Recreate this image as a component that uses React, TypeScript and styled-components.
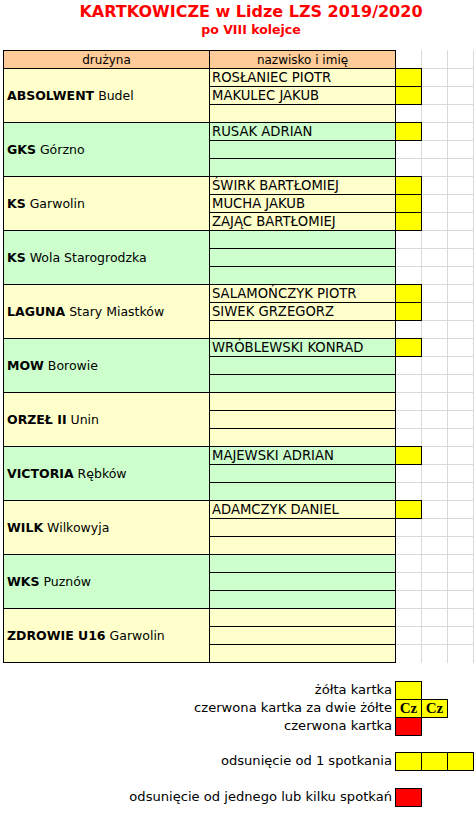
import React from 'react';
import styled, { createGlobalStyle } from 'styled-components';

const Global = createGlobalStyle`
  html, body { margin: 0; padding: 0; background: #fff; }
  body { font-family: "DejaVu Sans", Verdana, sans-serif; color: #000; }
  *, *::before, *::after { box-sizing: border-box; }
`;

const Page = styled.div`
  width: 476px;
  height: 813px;
  overflow: hidden;
`;

const Heading = styled.header`
  height: 50px;
  padding: 3px 0 0 26px;
  display: flex;
  flex-direction: column;
  align-items: center;
  color: #ff0000;
`;

const Title = styled.h1`
  margin: 0;
  font-size: 16px;
  line-height: 18px;
  font-weight: bold;
  white-space: nowrap;
`;

const Subtitle = styled.h2`
  margin: 1px 0 0;
  font-size: 12.5px;
  line-height: 15px;
  font-weight: bold;
  white-space: nowrap;
`;

const Sheet = styled.div`
  display: grid;
  margin-left: 3px;
  grid-template-columns: 207px 186px 26px 26px 26px;
  grid-template-rows: 19px;
  grid-auto-rows: 18px;
`;

const HeadCell = styled.div<{ $first?: boolean }>`
  background: #ffcc99;
  border-top: 1px solid #000;
  border-right: 1px solid #000;
  border-bottom: 1px solid #000;
  border-left: ${(p) => (p.$first ? '1px solid #000' : 'none')};
  display: flex;
  align-items: center;
  justify-content: center;
  font-size: 12px;
  white-space: nowrap;
`;

const EmptyCell = styled.div<{ $last?: boolean }>`
  border-right: 1px solid #d9d9d9;
  border-bottom: ${(p) => (p.$last ? 'none' : '1px solid #d9d9d9')};
`;

const TeamCell = styled.div<{ $bg: string }>`
  grid-row: span 3;
  background: ${(p) => p.$bg};
  border-left: 1px solid #000;
  border-right: 1px solid #000;
  border-bottom: 1px solid #000;
  display: flex;
  align-items: center;
  padding-left: 3px;
  font-size: 12.5px;
  white-space: nowrap;
  b { font-weight: bold; }
`;

const PlayerCell = styled.div<{ $bg: string }>`
  background: ${(p) => p.$bg};
  border-right: 1px solid #000;
  border-bottom: 1px solid #000;
  display: flex;
  align-items: center;
  padding-left: 2px;
  font-size: 13.2px;
  white-space: nowrap;
`;

const CardCell = styled.div`
  background: #ffff00;
  border: 1px solid #000;
  margin: -1px 0 0 -1px;
  position: relative;
  z-index: 1;
`;

const Legend = styled.div`
  display: grid;
  margin: 19px 0 0 3px;
  grid-template-columns: 393px 26px 26px 26px;
  grid-template-rows: 18px 18px 18px 17px 18px 18px 18px;
`;

const LegendLabel = styled.div<{ $row: number }>`
  grid-column: 1;
  grid-row: ${(p) => p.$row};
  text-align: right;
  padding-right: 4px;
  font-size: 13.1px;
  line-height: 16px;
  white-space: nowrap;
`;

const LegendBox = styled.div<{ $row: number; $col: number; $color: string }>`
  grid-column: ${(p) => p.$col};
  grid-row: ${(p) => p.$row};
  background: ${(p) => p.$color};
  border: 1px solid #000;
  margin: -1px 0 0 -1px;
  display: flex;
  align-items: center;
  justify-content: center;
  font-family: "Liberation Serif", "Times New Roman", serif;
  font-weight: bold;
  font-size: 15px;
`;

const YELLOW_BG = '#ffffcc';
const GREEN_BG = '#ccffcc';
const CARD_YELLOW = '#ffff00';
const CARD_RED = '#ff0000';

type Team = { bold: string; rest: string; players: string[] };

const teams: Team[] = [
  { bold: 'ABSOLWENT', rest: 'Budel', players: ['ROSŁANIEC PIOTR', 'MAKULEC JAKUB'] },
  { bold: 'GKS', rest: 'Górzno', players: ['RUSAK ADRIAN'] },
  { bold: 'KS', rest: 'Garwolin', players: ['ŚWIRK BARTŁOMIEJ', 'MUCHA JAKUB', 'ZAJĄC BARTŁOMIEJ'] },
  { bold: 'KS', rest: 'Wola Starogrodzka', players: [] },
  { bold: 'LAGUNA', rest: 'Stary Miastków', players: ['SALAMOŃCZYK PIOTR', 'SIWEK GRZEGORZ'] },
  { bold: 'MOW', rest: 'Borowie', players: ['WRÓBLEWSKI KONRAD'] },
  { bold: 'ORZEŁ II', rest: 'Unin', players: [] },
  { bold: 'VICTORIA', rest: 'Rębków', players: ['MAJEWSKI ADRIAN'] },
  { bold: 'WILK', rest: 'Wilkowyja', players: ['ADAMCZYK DANIEL'] },
  { bold: 'WKS', rest: 'Puznów', players: [] },
  { bold: 'ZDROWIE U16', rest: 'Garwolin', players: [] },
];

export default function App() {
  return (
    <Page>
      <Global />
      <Heading>
        <Title>KARTKOWICZE w Lidze LZS 2019/2020</Title>
        <Subtitle>po VIII kolejce</Subtitle>
      </Heading>
      <Sheet>
        <HeadCell $first>drużyna</HeadCell>
        <HeadCell>nazwisko i imię</HeadCell>
        <EmptyCell />
        <EmptyCell />
        <EmptyCell />
        {teams.map((t, ti) => {
          const bg = ti % 2 === 0 ? YELLOW_BG : GREEN_BG;
          const isLastTeam = ti === teams.length - 1;
          return (
            <React.Fragment key={ti}>
              <TeamCell $bg={bg}>
                <span>
                  <b>{t.bold}</b> {t.rest}
                </span>
              </TeamCell>
              {[0, 1, 2].map((r) => {
                const name = t.players[r] || '';
                const last = isLastTeam && r === 2;
                return (
                  <React.Fragment key={r}>
                    <PlayerCell $bg={bg}>{name}</PlayerCell>
                    {name ? <CardCell /> : <EmptyCell $last={last} />}
                    <EmptyCell $last={last} />
                    <EmptyCell $last={last} />
                  </React.Fragment>
                );
              })}
            </React.Fragment>
          );
        })}
      </Sheet>
      <Legend>
        <LegendLabel $row={1}>żółta kartka</LegendLabel>
        <LegendBox $row={1} $col={2} $color={CARD_YELLOW} />
        <LegendLabel $row={2}>czerwona kartka za dwie żółte</LegendLabel>
        <LegendBox $row={2} $col={2} $color={CARD_YELLOW}>Cz</LegendBox>
        <LegendBox $row={2} $col={3} $color={CARD_YELLOW}>Cz</LegendBox>
        <LegendLabel $row={3}>czerwona kartka</LegendLabel>
        <LegendBox $row={3} $col={2} $color={CARD_RED} />
        <LegendLabel $row={5}>odsunięcie od 1 spotkania</LegendLabel>
        <LegendBox $row={5} $col={2} $color={CARD_YELLOW} />
        <LegendBox $row={5} $col={3} $color={CARD_YELLOW} />
        <LegendBox $row={5} $col={4} $color={CARD_YELLOW} />
        <LegendLabel $row={7}>odsunięcie od jednego lub kilku spotkań</LegendLabel>
        <LegendBox $row={7} $col={2} $color={CARD_RED} />
      </Legend>
    </Page>
  );
}
